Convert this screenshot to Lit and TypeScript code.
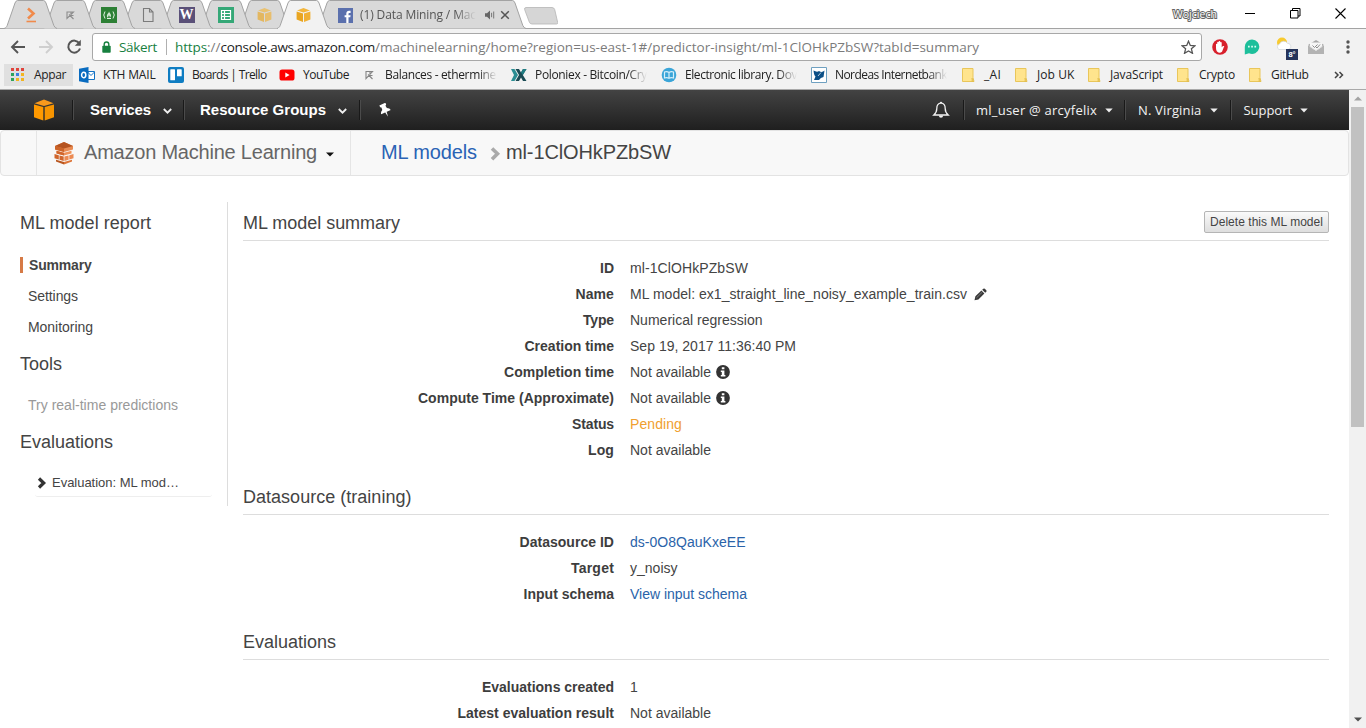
import { LitElement, html, svg, css, nothing } from "lit";
import { customElement, property } from "lit/decorators.js";

// A single-line label whose tracking is tuned so that it spans a given width.
@customElement("fit-text")
class FitText extends LitElement {
  static styles = css`
    :host { display: block; flex: none; white-space: pre; }
    .t { display: inline-block; white-space: pre; }
  `;
  @property() text = "";
  @property({ type: Number }) w = 0;
  @property({ attribute: false }) gap = 0;

  render() {
    return html`<span class="t" style="letter-spacing:${this.gap}px">${this.text}</span>`;
  }

  firstUpdated() {
    const el = this.renderRoot.querySelector(".t") as HTMLElement;
    const natural = el.getBoundingClientRect().width;
    if (this.w && natural) this.gap = (this.w - natural) / this.text.length;
  }
}

const fit = (text: string, w: number, cls = "") =>
  html`<fit-text class=${cls} .text=${text} .w=${w}></fit-text>`;

const icon = (w: number, h: number, body: unknown, cls = "") =>
  html`<svg class="ic ${cls}" width=${w} height=${h} viewBox="0 0 ${w} ${h}">${body}</svg>`;

const cube = svg`
  <path d="M1 3.6 7.5 1 14 3.6 7.5 5.6z" fill="#f3b63c"/>
  <path d="M.6 4.6 7 6.4V15L.6 12.6z" fill="#e9a520"/>
  <path d="M14.4 4.6 8 6.4V15l6.4-2.4z" fill="#f0b034"/>`;

const fav = {
  crunch: icon(16, 16, svg`<path d="M5 1.500 10.500 6.500 5 11.500" fill="none" stroke="#f08a4b" stroke-width="2.600"/><path d="M3.500 14.500h9.500" stroke="#f08a4b" stroke-width="1.600"/>`),
  ether: icon(16, 16, svg`<path d="M5 5h6.500L5 11.500zM7 7.500l4.500 4.500M9 5.500v3l2.500 0" fill="none" stroke="#8d8d8d" stroke-width="1.100"/>`),
  fcc: icon(16, 16, svg`<path d="M0 0h16v16H0z" fill="#2d8035"/><path d="M4 4.500q-2.500 3.500 0 7M12 4.500q2.500 3.500 0 7M6 11.500h4" fill="none" stroke="#e6f2e6" stroke-width="1"/><path d="M8 4.200c.3 2 2.200 2.500 2 4.600-.2 1.300-1 2-1.400 2 .5-1.300-.1-2-.8-2.600-.2 1-.9 1.200-.5 2.600-1-.3-1.600-1.200-1.400-2.500C6.200 6.600 8 6 8 4.200z" fill="#cfe6d0"/>`),
  page: icon(16, 16, svg`<path d="M3.500 1.500h6l3.500 3.500v9.500H3.500zM9.500 1.500V5H13" fill="none" stroke="#7b7b7b" stroke-width="1.100"/>`),
  wiki: html`<span class="wfav">W</span>`,
  sheet: icon(16, 16, svg`<path d="M0 0h16v16H0z" fill="#35a877"/><path d="M3.500 3.500h9v9h-9zM3.500 6.500h9M3.500 9.500h9M6.500 3.500v9" fill="none" stroke="#fff" stroke-width="1.200"/>`),
  cubeDim: icon(15, 16, cube, "dim"),
  cube: icon(15, 16, cube),
};

const tabShape = (w: number, active = false) => html`
  <svg class="shape" width=${w} height="29" viewBox="0 0 ${w} 29">
    <path d="M0 28.500C2 28 2.500 27 3.200 25.500L11 3Q12 .5 13.500 .5H${w - 13.5}Q${w - 12} .5 ${w - 11} 3L${w - 3.2} 25.500Q${w - 2} 28 ${w} 28.500"
      fill=${active ? "#f2f2f2" : "#d9d9d9"} stroke="#a3a3a3"/>
    ${active ? svg`<path d="M1 28.500H${w - 1}" stroke="#f2f2f2" stroke-width="1.2"/>` : nothing}
  </svg>`;

const folder = icon(16, 16, svg`<path d="M2.500 1.500h10.500v9l1 4H2.500z" fill="#ffe48d" stroke="#e9c65a"/><path d="M12 14.500v-3.500l1.500 3.500z" fill="#f7d264" stroke="#dcb94a" stroke-width=".6"/>`);

const dot = (x: number, y: number, c: string) => svg`<path d="M${x} ${y}h3v3h-3z" fill=${c}/>`;

const bookmarks = [
  { at: 79, next: 168, w: 52.5, text: "KTH MAIL", icon: icon(16, 16, svg`<path d="M8 4.500h7.500v8H8" fill="#fff" stroke="#1372c4"/><path d="m8.500 5 3.500 3.500L15.500 5" fill="none" stroke="#1372c4"/><path d="M0 1.800 9.500 0v16L0 14.200z" fill="#0a6cc0"/><ellipse cx="4.700" cy="8" rx="2.100" ry="2.700" fill="none" stroke="#fff" stroke-width="1.500"/>`) },
  { at: 168, next: 279, w: 74.5, text: "Boards | Trello", icon: icon(16, 16, svg`<rect width="16" height="16" rx="2" fill="#0f7dc2"/><rect x="2.300" y="2.300" width="4.700" height="11" rx=".6" fill="#fff"/><rect x="9" y="2.300" width="4.700" height="7" rx=".6" fill="#fff"/>`) },
  { at: 279, next: 361, w: 46, text: "YouTube", icon: icon(16, 16, svg`<rect x=".5" y="2.500" width="15" height="11" rx="2.600" fill="#f00"/><path d="m6.300 5.500 4.300 2.500-4.300 2.500z" fill="#fff"/>`) },
  { at: 361, next: 511, w: 111, text: "Balances - ethermine", fade: 1, icon: icon(16, 16, svg`<path d="M5 4.500h6.500L5 11.500zM7 7.500l4.500 4.500M9 5v3.500h2.500" fill="none" stroke="#858585" stroke-width="1.100"/>`) },
  { at: 511, next: 661, w: 112, text: "Poloniex - Bitcoin/Cry", fade: 1, icon: icon(16, 16, svg`<path d="M0 2h3.500L7 8l-3.500 6H0l3-6z" fill="#2b8d92"/><path d="M4.500 2H8l2 3.500L12 2h3.500l-3.700 6 3.700 6H12L10 10.500 8 14H4.500L8 8z" fill="#1b4b54"/><path d="M12 2h3.500l-3.700 6L10 5.500z" fill="#1f7d83"/>`) },
  { at: 661, next: 811, w: 112, text: "Electronic library. Dov", fade: 1, icon: icon(16, 16, svg`<circle cx="8" cy="8" r="7.300" fill="#3aa5d8"/><path d="M3.500 5q2.500-.9 4.500.5 2-1.400 4.500-.5v6q-2.500-.9-4.500.3-2-1.200-4.500-.3zM8 5.500v6" fill="none" stroke="#d6effa" stroke-width="1.200"/>`) },
  { at: 811, next: 960, w: 112, text: "Nordeas Internetbank", fade: 1, icon: icon(16, 16, svg`<path d="M.5.5h15v15H.5z" fill="#fff" stroke="#6fa0c0"/><path d="M2.500 3.500Q6 5.500 8 4q3 2 5.500-.5l-1 6.500q-3 .5-4.500 3H3l1.500-3.500q-1.500-1-2-6z" fill="#0b4f86"/><path d="m7 9 3-3.500" stroke="#fff" stroke-width=".7"/>`) },
  { at: 960, next: 1013, w: 17, text: "_AI", icon: folder },
  { at: 1013, next: 1086, w: 37.5, text: "Job UK", icon: folder },
  { at: 1086, next: 1175, w: 53, text: "JavaScript", icon: folder },
  { at: 1175, next: 1247, w: 36, text: "Crypto", icon: folder },
  { at: 1247, next: 1334, w: 37.5, text: "GitHub", icon: folder },
];

@customElement("browser-chrome")
class BrowserChrome extends LitElement {
  static styles = css`
    :host { display: block; font: 12px/16px "Open Sans", sans-serif; color: #222; }
    .ic { display: block; flex: none; }
    .strip { display: flex; height: 29px; background: linear-gradient(#fff 28px, #a3a3a3 28px); padding-left: 4px; }
    .tab { display: grid; flex: none; width: 53px; margin-right: -14px; position: relative; }
    .tab.wide { width: 210px; z-index: 0; }
    .tab > * { grid-area: 1 / 1; }
    .shape { display: block; }
    .face { display: flex; align-items: center; justify-content: center; height: 30px; }
    .wide .face { justify-content: flex-start; padding-left: 22px; color: #555; }
    .dim { opacity: .65; }
    .wfav { width: 16px; height: 16px; background: #5a5078; color: #fff; text-align: center; font: bold 14px/16px "Liberation Serif", serif; }
    .title { margin-left: 7px; width: 117px; -webkit-mask-image: linear-gradient(90deg, #000 82%, transparent 99%); }
    .audio { margin-left: 7px; }
    .close { margin-left: 4px; }
    .new { margin: 7px 0 0 12px; }
    .user { margin: 6px 0 0 auto; font-size: 10.5px; color: #fff; -webkit-text-stroke: 2px #666; paint-order: stroke fill; }
    .win { display: flex; align-items: center; height: 27px; margin: 0 20px 0 28px; gap: 34px; }
    .bar { display: flex; align-items: center; height: 35px; background: #f2f2f2; padding: 0 14px 0 10px; }
    .fwd { margin-left: 12px; }
    .reload { margin-left: 11px; }
    .url { display: flex; align-items: center; box-sizing: border-box; height: 28px; width: 1110px; margin: 1px 0 0 9px; border: 1px solid #a8a8a8; border-radius: 3px; background: #fff; padding: 0 5px 0 9px; font-size: 13.5px; }
    .safe { margin-left: 8px; color: #17803f; }
    .sep { width: 1px; height: 16px; background: #b0b0b0; margin: 0 8px 0 9px; }
    .g { color: #17803f; } .m { color: #7b7b7b; } .k { color: #222; }
    .star { margin-left: auto; }
    .ext { display: flex; align-items: center; flex: 1; margin-left: 10px; }
    .e2 { margin-left: 16px; } .e3 { margin-left: 16px; } .e4 { margin-left: 10px; } .e5 { margin-left: auto; }
    .weather { display: grid; width: 22px; height: 26px; }
    .weather > * { grid-area: 1 / 1; }
    .badge { place-self: end; width: 12px; height: 11px; background: #26345a; color: #fff; font: bold 7.500px/11px "Liberation Sans", sans-serif; text-align: center; }
    .marks { display: flex; align-items: center; height: 26px; background: #f2f2f2; border-bottom: 1px solid #a9a9a9; padding: 0 0 3px 4px; box-sizing: border-box; }
    .apps { display: flex; align-items: center; width: 69px; height: 22px; margin-right: 6px; padding-left: 6px; background: #e0e0e0; box-sizing: border-box; }
    .apps fit-text { margin-left: 9px; }
    .mark { display: flex; align-items: center; flex: none; }
    .mark .lab { margin-left: 8px; flex: none; }
    .lab.fade { width: 112px; -webkit-mask-image: linear-gradient(90deg, #000 83%, transparent 100%); }
  `;

  render() {
    const pinned = [fav.crunch, fav.ether, fav.fcc, fav.page, fav.wiki, fav.sheet, fav.cubeDim, fav.cube];
    return html`
      <div class="strip">
        ${pinned.map((f, i) => html`<div class="tab" style="z-index:${i === 7 ? 20 : 10 - i}">${tabShape(53, i === 7)}<div class="face">${f}</div></div>`)}
        <div class="tab wide">
          ${tabShape(210)}
          <div class="face">
            ${icon(15, 15, svg`<path d="M0 0h15v15H0z" fill="#5b70ad"/><path d="M8.300 15V9.300H6.600V7.200h1.700V5.600c0-1.900 1-2.900 2.800-2.900h1.500v2.200h-1.100c-.8 0-1 .3-1 1v1.300h2.100l-.3 2.100h-1.800V15z" fill="#fff"/>`)}
            <div class="title">${fit("(1) Data Mining / Mac", 116)}</div>
            ${icon(12, 12, svg`<path d="M1 4.200h2L6 1.500v9L3 7.800H1z" fill="#666"/><path d="M7.600 3.800v4.400M9.700 2.500v7" stroke="#777" stroke-width="1"/>`, "audio")}
            ${icon(10, 10, svg`<path d="m1.200 1.200 7.600 7.600M8.800 1.200 1.200 8.800" stroke="#555" stroke-width="1.500"/>`, "close")}
          </div>
        </div>
        ${icon(34, 18, svg`<path d="M2 .5h26q2 0 2.700 2l3 13q.3 1.500-1.200 1.500H8q-2 0-2.700-2L.6 2.500Q.2.500 2 .5z" fill="#d6d6d6" stroke="#b5b5b5" stroke-width=".8"/>`, "new")}
        ${fit("Wojciech", 44, "user")}
        <div class="win">
          ${icon(11, 11, svg`<path d="M0 5.500h10" stroke="#000"/>`)}
          ${icon(11, 11, svg`<path d="M.5 2.500h7.500v7.500H.5zM2.500 2.500V.5h7.500V8H8" fill="none" stroke="#000"/>`)}
          ${icon(11, 11, svg`<path d="m.5.5 10 10m0-10-10 10" stroke="#000" stroke-width="1.100"/>`)}
        </div>
      </div>
      <div class="bar">
        ${icon(16, 16, svg`<path d="M15 8H2.500M8 2 2 8l6 6" fill="none" stroke="#555" stroke-width="1.900"/>`)}
        ${icon(16, 16, svg`<path d="M1 8h12.500M8 2l6 6-6 6" fill="none" stroke="#cfcfcf" stroke-width="1.900"/>`, "fwd")}
        ${icon(18, 16, svg`<path d="M14.300 4.300A6 6 0 1 0 15 9.500" fill="none" stroke="#555" stroke-width="2"/><path d="M15.800.8v6H9.800z" fill="#555"/>`, "reload")}
        <div class="url">
          ${icon(9, 12, svg`<path d="M2.200 5V3.300a2.300 2.300 0 0 1 4.600 0V5" fill="none" stroke="#17803f" stroke-width="1.400"/><rect x=".3" y="4.700" width="8.400" height="7" rx=".8" fill="#17803f"/>`)}
          ${fit("Säkert", 38, "safe")}
          <span class="sep"></span>
          ${fit("https", 32, "g")}${fit("://", 13.5, "m")}${fit("console.aws.amazon.com", 154.5, "k")}${fit("/machinelearning/home?region=us-east-1#/predictor-insight/ml-1ClOHkPZbSW?tabId=summary", 604, "m")}
          ${icon(15, 14, svg`<path d="m7.500 1.200 1.800 4.200 4.600.4-3.500 3 1.100 4.500-4-2.400-4 2.400 1.100-4.500-3.500-3 4.600-.4z" fill="none" stroke="#555" stroke-width="1.300"/>`, "star")}
        </div>
        <div class="ext">
          ${icon(16, 16, svg`<circle cx="8" cy="8" r="7.800" fill="#d8202c"/><path d="M4 5q.7-.7 1.200 0V3.300q.8-.9 1.500 0V2.300q.8-.8 1.500 0v1q.9-.8 1.500.2v4.800q1.200-1.800 2.600-1.200L10 12.800Q7.500 14.800 5 12.500 4 11.200 4 9z" fill="#fff"/>`)}
          ${icon(16, 16, svg`<path d="M8 .5a7.200 7.200 0 1 1-3 13.700L.8 15.600V7.800A7.200 7.200 0 0 1 8 .5z" fill="#1dbf9b"/><path d="M4 6.700h1.700v1.700H4zM7.200 6.700h1.700v1.700H7.200zM10.400 6.700h1.700v1.700h-1.700z" fill="#d9fff4"/>`, "e2")}
          <div class="weather e3">
            ${icon(16, 18, svg`<circle cx="6" cy="8.500" r="5" fill="#f8ca2f"/><path d="M3 15.500a3 3 0 0 1 .5-5.500 4.500 4.500 0 0 1 8-.7c2.300 0 3.300 1.500 3.300 3.200 0 1.800-1.300 3-3 3z" fill="#fff" stroke="#cfd3d8" stroke-width=".7"/>`)}
            <span class="badge">8°</span>
          </div>
          ${icon(16, 14, svg`<path d="M0 5 8 0l8 5v8H0z" fill="#a9a9a9"/><path d="M2 2.500h12V8L8 11 2 8z" fill="#f6f6f6"/><path d="m4.500 5.500 2 2 3-3M8 7l1 1 3-3.500" fill="none" stroke="#8b8b8b"/><path d="m0 5.500 8 5.500 8-5.500V14H0z" fill="#b3b3b3"/><path d="m0 5 8 5.500L16 5" fill="none" stroke="#ddd" stroke-width=".8"/>`, "e4")}
          ${icon(8, 16, svg`<circle cx="4" cy="3" r="1.700" fill="#555"/><circle cx="4" cy="8" r="1.700" fill="#555"/><circle cx="4" cy="13" r="1.700" fill="#555"/>`, "e5")}
        </div>
      </div>
      <div class="marks">
        <div class="apps">
          ${icon(15, 14, svg`${dot(1, 0, "#e0443c")}${dot(6, 0, "#e0443c")}${dot(11, 0, "#e0443c")}${dot(1, 5, "#2fa35b")}${dot(6, 5, "#3f7fe0")}${dot(11, 5, "#f3b520")}${dot(1, 10, "#2fa35b")}${dot(6, 10, "#f3b520")}${dot(11, 10, "#f3b520")}`)}
          ${fit("Appar", 32)}
        </div>
        ${bookmarks.map((b) => html`<div class="mark" style="width:${b.next - b.at}px">${b.icon}<div class="lab ${b.fade ? "fade" : ""}">${fit(b.text, b.w)}</div></div>`)}
        ${icon(10, 10, svg`<path d="m1 2 3 3-3 3M5.500 2l3 3-3 3" fill="none" stroke="#444" stroke-width="1.500"/>`)}
      </div>`;
  }
}

@customElement("aws-nav")
class AwsNav extends LitElement {
  static styles = css`
    :host { display: block; }
    .ic { display: block; flex: none; }
    .nav { display: flex; align-items: center; height: 40px; background: linear-gradient(#434343, #1f1f1f); color: #fff; padding-left: 33px; }
    .div { flex: none; width: 1px; height: 20px; background: #191919; border-right: 1px solid #4b4b4b; }
    .d1 { margin: 0 16px 0 17px; } .d2 { margin: 0 15px 0 11px; } .d3 { margin: 0 18px 0 12px; }
    .big { font: bold 15px/20px "Liberation Sans", sans-serif; }
    .chev { margin: 2px 0 0 12px; }
    .bell { margin-left: auto; }
    .sm { font: 13px/20px "Open Sans", "Noto Sans", sans-serif; color: #f3f3f3; }
    .d4 { margin: 0 11px 0 13px; } .d5 { margin: 0 12px 0 11px; } .d6 { margin: 0 12px 0 12px; }
    .car { margin-left: 8px; }
    .end { margin-right: 41px; }
    .crumbs { display: flex; box-sizing: border-box; height: 46px; border: 1px solid #e3e3e3; border-radius: 4px; background: #f8f8f8; padding-left: 35px; font: 20px/42px "Liberation Sans", sans-serif; }
    .svc { display: flex; align-items: center; box-sizing: border-box; width: 315px; border: 1px solid #e5e5e5; border-width: 0 1px; padding-left: 16px; color: #666; }
    .svc fit-text { margin: 0 0 2px 9px; }
    .drop { margin: 3px 0 0 9px; }
    .path { display: flex; align-items: center; padding: 0 0 2px 30px; color: #444; }
    .link { color: #2a63b5; }
    .next { margin: 4px 5px 0 13px; }
  `;

  render() {
    const chev = icon(9, 7, svg`<path d="M.8 1 4.500 4.700 8.200 1" fill="none" stroke="#eee" stroke-width="1.800"/>`, "chev");
    const car = (c = "") => icon(8, 5, svg`<path d="M.3.500h7.400L4 4.500z" fill="#eee"/>`, "car " + c);
    return html`
      <div class="nav">
        ${icon(22, 22, svg`<path d="m1.500 4.200 9.500-3.700 9.500 3.700L11 7z" fill="#f8991d"/><path d="M1 5.500 10.300 8v13.500L1 18.300z" fill="#ff9900"/><path d="M21 5.500 11.700 8v13.500L21 18.300z" fill="#f79400"/>`)}
        <span class="div d1"></span>
        ${fit("Services", 61, "big")}${chev}
        <span class="div d2"></span>
        ${fit("Resource Groups", 126, "big")}${chev}
        <span class="div d3"></span>
        ${icon(13, 15, svg`<g transform="rotate(-24 6 7)"><path d="M2.700.5h6.600v2l-1.100.7.300 2.800q2.700 1.200 2.700 3.400H.8q0-2.200 2.700-3.400l.3-2.800-1.100-.7z" fill="#fff"/><path d="M5.200 9h1.600L6 14.500z" fill="#fff"/></g>`)}
        ${icon(18, 18, svg`<path d="M9 2.200c-3.200 0-4.200 2.600-4.200 5.200 0 3.200-1 4.800-3 6.600h14.400c-2-1.800-3-3.400-3-6.600 0-2.600-1-5.200-4.200-5.200z" fill="none" stroke="#f2f2f2" stroke-width="1.300"/><path d="M7.800 2q0-1.300 1.200-1.300T10.200 2zM6.800 14.500h4.400q-.3 2.300-2.200 2.300t-2.200-2.300z" fill="#f2f2f2"/>`, "bell")}
        <span class="div d4"></span>
        ${fit("ml_user @ arcyfelix", 121, "sm")}${car()}
        <span class="div d5"></span>
        ${fit("N. Virginia", 63.5, "sm")}${car()}
        <span class="div d6"></span>
        ${fit("Support", 48.5, "sm")}${car("end")}
      </div>
      <div class="crumbs">
        <div class="svc">
          ${icon(22, 24, svg`
            <path d="m2 5 9-4 9 4v3.500l-9 2.500-9-2.500z" fill="#e88a52"/><path d="m2 5 9 2.500V11L2 8.500z" fill="#cd6428"/><path d="m2 5 9-4 9 4-9 2.500z" fill="#b5531f"/>
            <path d="m3.500 9.800 7.500 2 7.500-2v2.700L11 14.500l-7.500-2z" fill="#f0935a"/><path d="m3.500 9.800 7.500 2v2.700l-7.500-2z" fill="#d0652b"/>
            <path d="m1.500 13 4.300 1.200v4.300l-4.300-1.200zM6.500 14.400l4.200 1.100v4.400l-4.200-1.200z" fill="#d0652b"/><path d="m11.400 15.500 4.200-1.100v4.300l-4.200 1.200zM16.300 14.200l4.200-1.200v4.300l-4.200 1.200z" fill="#ec8a52"/>
            <path d="m3 18.700 8 2.300v2.500l-8-3z" fill="#b9561f"/><path d="m19 18.700-8 2.300v2.500l8-3z" fill="#dd7538"/>`)}
          ${fit("Amazon Machine Learning", 233)}
          ${icon(8, 5, svg`<path d="M0 .5h8L4 4.500z" fill="#111"/>`, "drop")}
        </div>
        <div class="path">
          ${fit("ML models", 96, "link")}
          ${icon(11, 14, svg`<path d="m2 1.500 5.500 5.300L2 12.300" fill="none" stroke="#aaa" stroke-width="3.600"/>`, "next")}
          ${fit("ml-1ClOHkPZbSW", 165)}
        </div>
      </div>`;
  }
}

type Row = { k: string; kw: number; v: string; vw: number; cls?: string; mark?: string };

const sections: { title: string; w: number; action?: boolean; rows: Row[] }[] = [
  {
    title: "ML model summary", w: 157, action: true,
    rows: [
      { k: "ID", kw: 14, v: "ml-1ClOHkPZbSW", vw: 118 },
      { k: "Name", kw: 38.5, v: "ML model: ex1_straight_line_noisy_example_train.csv", vw: 337, mark: "edit" },
      { k: "Type", kw: 31, v: "Numerical regression", vw: 132.5 },
      { k: "Creation time", kw: 89.5, v: "Sep 19, 2017 11:36:40 PM", vw: 166 },
      { k: "Completion time", kw: 110, v: "Not available", vw: 81, mark: "info" },
      { k: "Compute Time (Approximate)", kw: 196, v: "Not available", vw: 81, mark: "info" },
      { k: "Status", kw: 42, v: "Pending", vw: 52, cls: "pending" },
      { k: "Log", kw: 26, v: "Not available", vw: 81 },
    ],
  },
  {
    title: "Datasource (training)", w: 168.5,
    rows: [
      { k: "Datasource ID", kw: 94.5, v: "ds-0O8QauKxeEE", vw: 115.5, cls: "link" },
      { k: "Target", kw: 43, v: "y_noisy", vw: 47.5 },
      { k: "Input schema", kw: 90.5, v: "View input schema", vw: 117, cls: "link" },
    ],
  },
  {
    title: "Evaluations", w: 93,
    rows: [
      { k: "Evaluations created", kw: 132, v: "1", vw: 8 },
      { k: "Latest evaluation result", kw: 156.5, v: "Not available", vw: 81 },
    ],
  },
];

@customElement("app-root")
class AppRoot extends LitElement {
  static styles = css`
    :host { display: flex; flex-direction: column; width: 1366px; height: 728px; overflow: hidden; background: #fff; color: #444; font: 14px/26px "Liberation Sans", Arial, sans-serif; }
    .ic { display: block; flex: none; }
    .view { display: flex; flex: 1; min-height: 0; }
    .page { flex: 1; min-width: 0; overflow: hidden; }
    .body { display: flex; padding: 26px 20px 0 20px; }
    .side { box-sizing: border-box; width: 208px; height: 304px; border-right: 1px solid #ddd; flex: none; }
    .h { font-size: 18px; line-height: 37px; }
    .head .h { padding-top: 2px; }
    .side .h { line-height: 20px; }
    .h1 { margin-top: 11px; } .h2 { margin-top: 12px; } .h3 { margin-top: 12px; }
    .item { display: flex; align-items: center; height: 31px; padding-left: 8px; }
    .first { margin-top: 16px; }
    .active { padding-left: 0; font-weight: bold; }
    .active::before { content: ""; width: 3px; height: 16px; background: #d67a46; margin-right: 6px; }
    .off { color: #999; margin-top: 15px; }
    .eval { display: flex; align-items: center; width: 177px; height: 27px; margin: 18px 0 0 15px; border-bottom: 1px solid #eee; font-size: 13px; box-sizing: border-box; border-radius: 3px; }
    .eval fit-text { margin-left: 5px; }
    .evi { margin-left: 2px; }
    .main { flex: 1; padding-left: 15px; }
    .section + .section { margin-top: 15px; }
    .section:last-child { margin-top: 16px; }
    .section:first-child { margin-top: 2px; }
    .head { display: flex; justify-content: space-between; align-items: center; height: 36px; border-bottom: 1px solid #ddd; margin-bottom: 14px; }
    .btn { box-sizing: border-box; width: 125px; height: 22px; padding: 0 0 0 5px; border: 1px solid #b5b5b5; border-radius: 2px; background: linear-gradient(#fafafa, #dedede); font-size: 12px; line-height: 20px; color: #444; margin-bottom: 1px; }
    .row { display: flex; height: 26px; align-items: center; }
    .key { width: 371px; display: flex; justify-content: flex-end; font-weight: bold; margin-right: 16px; color: #3d3d3d; }
    .pending { color: #f0a030; }
    .link { color: #2a63a9; }
    .info { margin-left: 5px; } .edit { margin-left: 7px; }
    .scroll { display: flex; flex-direction: column; align-items: center; box-sizing: border-box; width: 17px; background: #f1f1f1; padding: 6px 0 6px; }
    .thumb { width: 13px; height: 320px; background: #c1c1c1; margin-top: 6px; }
    .down { margin-top: auto; }
  `;

  render() {
    const marks: Record<string, unknown> = {
      info: icon(14, 14, svg`<circle cx="7" cy="7" r="6.900" fill="#333"/><path d="M5.800 2.300h2.600v2H5.800zM4.800 5.500h3.600v4.400h1v1.500H4.800V9.900h1V7h-1z" fill="#fff"/>`, "info"),
      edit: icon(13, 13, svg`<path d="m.5 12.200.9-4 6-5.700 3 3-6 5.900zM8.200 1.800l1.100-1q.8-.6 1.500 0l1.500 1.500q.6.700 0 1.500l-1.100 1z" fill="#3a3a3a"/><path d="m2.500 9.800 5.700-5.600" stroke="#999" stroke-width=".7"/>`, "edit"),
    };
    return html`
      <browser-chrome></browser-chrome>
      <div class="view">
        <div class="page">
          <aws-nav></aws-nav>
          <div class="body">
            <div class="side">
              <div class="h h1">${fit("ML model report", 131)}</div>
              <div class="item active first">${fit("Summary", 62.5)}</div>
              <div class="item">${fit("Settings", 50)}</div>
              <div class="item">${fit("Monitoring", 65)}</div>
              <div class="h h2">${fit("Tools", 42)}</div>
              <div class="item off">${fit("Try real-time predictions", 150)}</div>
              <div class="h h3">${fit("Evaluations", 93)}</div>
              <div class="eval">
                ${icon(10, 12, svg`<path d="M2 1.500 6.700 6 2 10.500" fill="none" stroke="#333" stroke-width="3.200"/>`, "evi")}
                ${fit("Evaluation: ML mod…", 127)}
              </div>
            </div>
            <div class="main">
              ${sections.map((s) => html`
                <div class="section">
                  <div class="head">
                    <div class="h">${fit(s.title, s.w)}</div>
                    ${s.action ? html`<div class="btn">${fit("Delete this ML model", 113)}</div>` : nothing}
                  </div>
                  ${s.rows.map((r) => html`
                    <div class="row">
                      <div class="key">${fit(r.k, r.kw)}</div>
                      ${fit(r.v, r.vw, r.cls ?? "")}${r.mark ? marks[r.mark] : nothing}
                    </div>`)}
                </div>`)}
            </div>
          </div>
        </div>
        <div class="scroll">
          ${icon(8, 5, svg`<path d="m0 4.500 4-4 4 4z" fill="#a3a3a3"/>`)}
          <div class="thumb"></div>
          ${icon(8, 5, svg`<path d="m0 .5 4 4 4-4z" fill="#505050"/>`, "down")}
        </div>
      </div>`;
  }
}
